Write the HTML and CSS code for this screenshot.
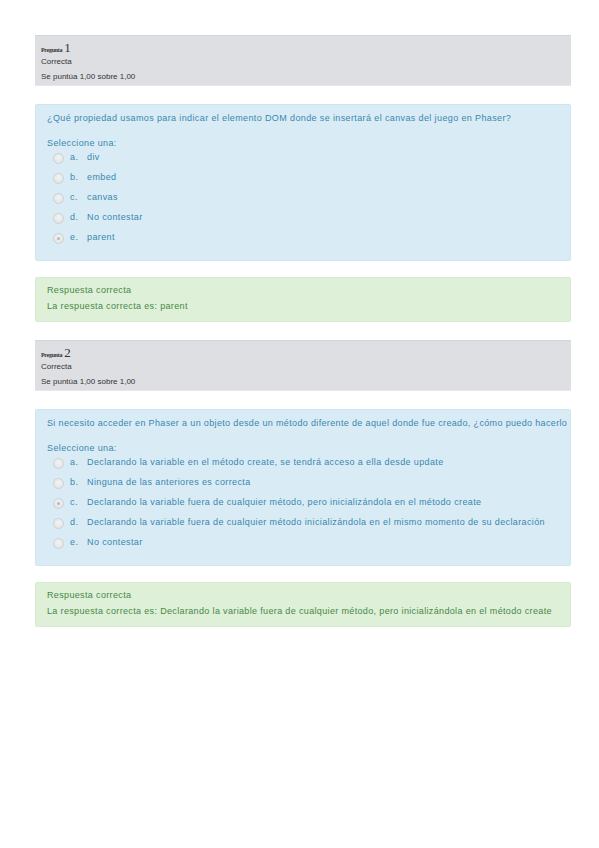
FILE: index.html
```html
<!DOCTYPE html>
<html lang="es">
<head>
<meta charset="utf-8">
<title>Quiz</title>
<link rel="stylesheet" href="styles.css">
</head>
<body>
<div class="page">
  <div class="info">
    <div class="qno"><span class="qlabel">Pregunta</span> <span class="qnum">1</span></div>
    <div class="state">Correcta</div>
    <div class="grade">Se puntúa 1,00 sobre 1,00</div>
  </div>
  <div class="formulation">
    <div class="qtext">¿Qué propiedad usamos para indicar el elemento DOM donde se insertará el canvas del juego en Phaser?</div>
    <div class="prompt">Seleccione una:</div>
    <div class="answers">
      <div class="opt"><span class="radio"></span><span class="letter">a.</span><span>div</span></div>
      <div class="opt"><span class="radio"></span><span class="letter">b.</span><span>embed</span></div>
      <div class="opt"><span class="radio"></span><span class="letter">c.</span><span>canvas</span></div>
      <div class="opt"><span class="radio"></span><span class="letter">d.</span><span>No contestar</span></div>
      <div class="opt"><span class="radio checked"></span><span class="letter">e.</span><span>parent</span></div>
    </div>
  </div>
  <div class="outcome">
    <div class="ftitle">Respuesta correcta</div>
    <div class="ftext">La respuesta correcta es: parent</div>
  </div>

  <div class="info">
    <div class="qno"><span class="qlabel">Pregunta</span> <span class="qnum">2</span></div>
    <div class="state">Correcta</div>
    <div class="grade">Se puntúa 1,00 sobre 1,00</div>
  </div>
  <div class="formulation">
    <div class="qtext tight">Si necesito acceder en Phaser a un objeto desde un método diferente de aquel donde fue creado, ¿cómo puedo hacerlo</div>
    <div class="prompt">Seleccione una:</div>
    <div class="answers">
      <div class="opt"><span class="radio"></span><span class="letter">a.</span><span>Declarando la variable en el método create, se tendrá acceso a ella desde update</span></div>
      <div class="opt"><span class="radio"></span><span class="letter">b.</span><span>Ninguna de las anteriores es correcta</span></div>
      <div class="opt"><span class="radio checked"></span><span class="letter">c.</span><span>Declarando la variable fuera de cualquier método, pero inicializándola en el método create</span></div>
      <div class="opt"><span class="radio"></span><span class="letter">d.</span><span>Declarando la variable fuera de cualquier método inicializándola en el mismo momento de su declaración</span></div>
      <div class="opt"><span class="radio"></span><span class="letter">e.</span><span>No contestar</span></div>
    </div>
  </div>
  <div class="outcome">
    <div class="ftitle">Respuesta correcta</div>
    <div class="ftext">La respuesta correcta es: Declarando la variable fuera de cualquier método, pero inicializándola en el método create</div>
  </div>
</div>
</body>
</html>
```
FILE: styles.css
```css
html, body {
  margin: 0;
  padding: 0;
  background: #ffffff;
}
body {
  font-family: "Liberation Sans", Arial, sans-serif;
}
.page {
  padding: 35px 0 0 35px;
  width: 536px;
  display: flex;
  flex-direction: column;
}
.info {
  box-sizing: border-box;
  height: 51px;
  background: #dedfe2;
  border-top: 1px solid #d2d5d9;
  border-bottom: 1px solid #e6e7e9;
  padding: 4px 6px 0 6px;
  color: #333333;
  font-size: 8px;
  margin-bottom: 18px;
}
.qno {
  font-family: "Liberation Serif", "Times New Roman", serif;
  height: 15px;
  line-height: 15px;
}
.qlabel {
  font-size: 6px;
  font-weight: bold;
  letter-spacing: -0.3px;
}
.qnum {
  font-size: 13px;
}
.state {
  height: 14px;
  line-height: 14px;
}
.grade {
  height: 15px;
  line-height: 15px;
}
.formulation {
  box-sizing: border-box;
  height: 157px;
  background: #d9ecf6;
  border: 1px solid #cfe6f1;
  border-radius: 2px;
  padding: 6px 0 0 11px;
  color: #3a87ad;
  font-size: 9px;
  letter-spacing: 0.38px;
  white-space: nowrap;
  margin-bottom: 16px;
}
.qtext {
  height: 14px;
  line-height: 14px;
}
.qtext.tight {
  letter-spacing: 0.35px;
}
.prompt {
  margin-top: 12px;
  height: 12px;
  line-height: 12px;
}
.answers {
  display: flex;
  flex-direction: column;
  padding-left: 6px;
  margin-top: -2px;
}
.opt {
  display: flex;
  align-items: center;
  height: 20px;
}
.radio {
  box-sizing: border-box;
  width: 11px;
  height: 11px;
  border-radius: 50%;
  border: 1px solid #cdd1d4;
  background: radial-gradient(circle at 50% 40%, #f2f3f3 0, #dfe1e2 100%);
  margin-right: 6px;
  margin-top: 3px;
  position: relative;
}
.radio.checked::after {
  content: "";
  position: absolute;
  left: 3px;
  top: 3px;
  width: 3px;
  height: 3px;
  border-radius: 50%;
  background: #b5b9bc;
}
.letter {
  width: 17px;
}
.outcome {
  box-sizing: border-box;
  height: 45px;
  background: #dff0d8;
  border: 1px solid #d8ebd0;
  border-radius: 2px;
  padding: 4px 0 0 11px;
  color: #468847;
  font-size: 9px;
  letter-spacing: 0.35px;
  white-space: nowrap;
  margin-bottom: 18px;
}
.ftitle {
  height: 16px;
  line-height: 16px;
}
.ftext {
  height: 16px;
  line-height: 16px;
}
```
